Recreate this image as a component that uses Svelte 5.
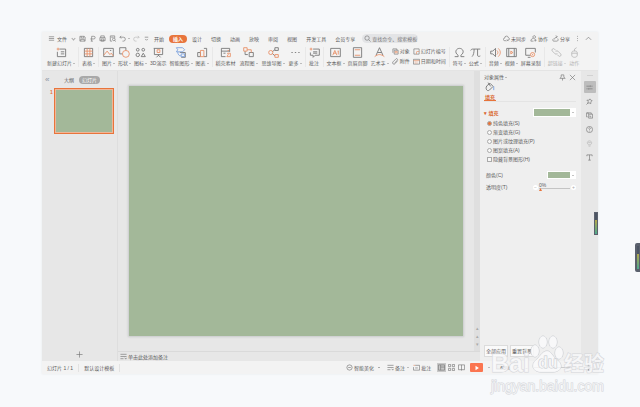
<script lang="ts">
  type Glyph = { g?: string; o?: string; b?: string };

  // 16x16 line icons: g = grey strokes, o = orange strokes, b = blue strokes
  const glyphs: Record<string, Glyph> = {
    menu: { g: "M2 4h12M2 8h12M2 12h12" },
    save: { g: "M2 3h10l2 2v9H2zM5 3v4h6V3M4 14v-4h8v4" },
    export: { g: "M4 14h5M6 14V3h5a3 3 0 010 6H3" },
    print: { g: "M4 6V2h8v4M2 6h12v7H2zM5 9h6v5H5z" },
    preview: { g: "M13 7V2H3v12h4M5 5h5M11 13a3 3 0 100-6 3 3 0 000 6M13 12l2 3" },
    undo: { g: "M5 2L2 5l3 3M2 5h8a4 4 0 010 9H8" },
    redo: { g: "M11 2l3 3-3 3M14 5H6a4 4 0 000 9h2" },
    more: { g: "M4 5h8M5 9l3 3 3-3" },
    search: { g: "M7 12A5 5 0 107 2a5 5 0 000 10M11 11l4 4" },
    cloud: { g: "M8 13H4a3 3 0 010-6 4 4 0 018-1 3 3 0 012 5M9 10l4 4M13 10l-4 4" },
    people: { g: "M8 7a3 3 0 100-5 3 3 0 000 5M8 8c-4 0-6 2-6 6h6M10 12h5M12 9v6" },
    share: { g: "M4 8c-3 2-3 6 0 6h7c3 0 4-3 2-6M6 10c0-4 3-6 6-6M9 1l3 3-3 3" },
    dots: { g: "M8 2v2M8 7v2M8 12v2" },
    up: { g: "M2 11l6-6 6 6" },
    newslide: { g: "M5 3h9v11H2V7M7 7h5M7 10h5", o: "M1 3h4M3 1v4" },
    table: { g: "M2 2h12v12H2z", o: "M2 6h12M2 10h12M6 2v12M10 2v12" },
    picture: { g: "M1 2h14v12H1zM10 5h2", o: "M1 12l5-6 4 5 2-2 3 4" },
    shape: { g: "M5 10H1V1h9v4", o: "M10 15A5 5 0 1010 5a5 5 0 000 10" },
    iconset: { g: "M4 6a2 2 0 100-4 2 2 0 000 4M12 6a2 2 0 100-4 2 2 0 000 4M4 14a2 2 0 100-5 2 2 0 000 5M12 9l3 5H9z" },
    demo: { g: "M1 2h14M2 2v9h12V2M8 11v2M5 15l3-3 3 3", o: "M6 4h4v4H6z" },
    smart: { g: "M7 8h8v7H9", b: "M2 1h9l3 3-3 3H2l2-3zM4 7c0 4 2 6 5 6M9 10h5v4H9z" },
    chart: { g: "M1 8h4v6H1zM10 2h4v12h-4", o: "M5 5h5v9H5z" },
    material: { g: "M8 14H2V2h12v5M2 6h12M5 9h3", o: "M11 9h4v5h-5l2-3zM11 5h2" },
    flow: { g: "M7 11H3V6M9 14h6V8H9z", o: "M1 1h5v5H1zM6 4h6v4" },
    mind: { g: "M6 7l4-3M6 9l4 4M10 1h5v4h-5z", o: "M4 11a3 3 0 100-6 3 3 0 000 6M10 11h5v4h-5z" },
    ellipsis: { g: "M2 8h2M7 8h2M12 8h2" },
    comment: { g: "M6 3h9v9H9l-3 3v-3H2V8M6 7h6M6 9h6", o: "M1 3h4M3 1v4" },
    textbox: { g: "M1 2h14v12H1z", o: "M4 12l3-7 3 7M5 9h4M11 6h2M12 6v5" },
    header: { g: "M2 1h12v14H2z", o: "M4 4h8M4 12h8" },
    wordart: { g: "M3 12L8 1l5 11M5 8h6", o: "M1 14c5-4 9-4 14 0" },
    object: { g: "M5 5h9v9H5zM2 11V2h9v3", o: "M7 8h5v3H7z" },
    clip: { g: "M13 6l-6 7a3 3 0 01-5-4l7-7a2 2 0 013 3l-6 7" },
    number: { g: "M2 2h12v12H2z", o: "M9 8h5M8 14V8" },
    date: { g: "M1 3h14v11H1z", o: "M1 6h14M4 9h2M8 9h2M4 12h2M8 12h2" },
    omega: { g: "M1 14h5v-2c-6-4-3-10 2-10s8 6 2 10v2h5" },
    pi: { g: "M1 5c1-2 2-2 4-2h10M6 3c0 5-1 9-3 11M11 3v9c0 2 2 2 4 1" },
    audio: { g: "M1 6h3l4-4v12l-4-4H1z", o: "M10 5c2 2 2 4 0 6M12 2c4 4 4 8 0 12" },
    video: { g: "M1 2h14v12H1zM4 2v12M12 2v12", o: "M7 6l3 2-3 2z" },
    record: { g: "M8 12H1V2h14v6M4 15h4", o: "M11 14a3 3 0 100-6 3 3 0 000 6M11 10v2" },
    link: { g: "M7 5L5 3a2 2 0 00-3 3l4 4a2 2 0 003-1M9 11l2 2a2 2 0 003-3l-4-4a2 2 0 00-3 1" },
    mouse: { g: "M4 8c0-3 8-3 8 0v4c0 4-8 4-8 0zM8 6V3l3-2M4 9h8" },
    pin: { g: "M5 2h6v5l3 3H2l3-3zM8 10v5" },
    close: { g: "M2 2l12 12M14 2L2 14" },
    bucket: { g: "M3 6l5-4 5 5-6 6c-4 3-7-3-4-7M5 1l4 6", b: "M14 7v6" },
    sliders: { g: "M1 5h8M12 5h3M10 3v4M1 11h3M7 11h8M6 9v4" },
    star: { g: "M9 2l2 3 3 1-3 3v4l-4-2-3 1 1-4-3-3h5zM1 15l4-4" },
    layers: { g: "M5 5V2H1v9h3M6 5h9v9H6zM3 2h9v3M9 8v3h3" },
    help: { g: "M8 15A7 7 0 108 1a7 7 0 000 14M6 6c0-3 5-2 4 0L8 8v2M8 12v1" },
    bulb: { g: "M6 11c-5-3-3-9 2-9s7 6 2 9zM6 14h4M5 6h6" },
    text: { g: "M2 5V2h12v3M8 2v12M5 14h6" },
    plus: { g: "M8 1v14M1 8h14" },
    notes: { g: "M1 3h14M1 8h14M1 13h7M11 11l2 3 2-3" },
    beauty: { g: "M8 14A6 6 0 108 2a6 6 0 000 12M5 8h6" },
    edit: { g: "M5 3h10v11H1V7M5 9h6", o: "M1 3h4" },
    normal: { g: "M1 2h14v12H1zM6 2v12M6 7h9" },
    grid: { g: "M1 1h5v5H1zM10 1h5v5h-5zM1 10h5v5H1zM10 10h5v5h-5z" },
    book: { g: "M1 2h14v11H1zM8 2v13" },
    fit: { g: "M8 1v14M1 8h14M6 3l2-2 2 2M6 13l2 2 2-2" },
  };

  type Tool = { icon: string; label: string; drop?: boolean; off?: boolean };

  const quick = ["save", "export", "print", "preview"];
  const tabs = ["开始", "插入", "设计", "切换", "动画", "放映", "审阅", "视图", "开发工具", "会员专享"];
  const groups: { wide?: boolean; tools: Tool[]; stacks?: Tool[][] }[] = [
    { tools: [{ icon: "newslide", label: "新建幻灯片", drop: true }] },
    { tools: [{ icon: "table", label: "表格", drop: true }] },
    {
      tools: [
        { icon: "picture", label: "图片", drop: true },
        { icon: "shape", label: "形状", drop: true },
        { icon: "iconset", label: "图标", drop: true },
        { icon: "demo", label: "3D演示" },
        { icon: "smart", label: "智能图形", drop: true },
        { icon: "chart", label: "图表", drop: true },
      ],
    },
    {
      wide: true,
      tools: [
        { icon: "material", label: "稻壳素材" },
        { icon: "flow", label: "流程图", drop: true },
        { icon: "mind", label: "思维导图", drop: true },
        { icon: "ellipsis", label: "更多", drop: true },
      ],
    },
    { tools: [{ icon: "comment", label: "批注" }] },
    {
      tools: [
        { icon: "textbox", label: "文本框", drop: true },
        { icon: "header", label: "页眉页脚" },
        { icon: "wordart", label: "艺术字", drop: true },
      ],
      stacks: [
        [{ icon: "object", label: "对象" }, { icon: "clip", label: "附件" }],
        [{ icon: "number", label: "幻灯片编号" }, { icon: "date", label: "日期和时间" }],
      ],
    },
    { tools: [{ icon: "omega", label: "符号", drop: true }, { icon: "pi", label: "公式", drop: true }] },
    {
      tools: [
        { icon: "audio", label: "音频", drop: true },
        { icon: "video", label: "视频", drop: true },
        { icon: "record", label: "屏幕录制" },
      ],
    },
    { tools: [{ icon: "link", label: "超链接", drop: true, off: true }, { icon: "mouse", label: "动作", off: true }] },
  ];
  const fills = ["纯色填充(S)", "渐变填充(G)", "图片或纹理填充(P)", "图案填充(A)"];
  const side = ["sliders", "star", "layers", "help", "bulb", "text"];

  let activeTab = $state("插入");
  let fill = $state("纯色填充(S)");
  let hideShapes = $state(false);
  let alpha = $state(0);
</script>

{#snippet icon(name: string)}
  <svg class="icon" viewBox="0 0 16 16" aria-hidden="true">
    {#if glyphs[name].g}<path class="g" d={glyphs[name].g} />{/if}
    {#if glyphs[name].o}<path class="o" d={glyphs[name].o} />{/if}
    {#if glyphs[name].b}<path class="b" d={glyphs[name].b} />{/if}
  </svg>
{/snippet}

<div class="page">
  <div class="app">
    <header class="menubar">
      <button class="file">{@render icon("menu")}文件<i class="chev"></i></button>
      <div class="quick">
        {#each quick as q}
          <button aria-label={q}>{@render icon(q)}</button>
        {/each}
        <button aria-label="undo">{@render icon("undo")}<i class="caret"></i></button>
        <button class="off" aria-label="redo">{@render icon("redo")}</button>
        <button aria-label="more">{@render icon("more")}</button>
      </div>
      <nav class="tabs">
        {#each tabs as t}
          <button class:active={t === activeTab} onclick={() => (activeTab = t)}>{t}</button>
        {/each}
      </nav>
      <label class="search">
        {@render icon("search")}
        <input type="text" placeholder="查找命令、搜索模板" aria-label="搜索" />
      </label>
      <div class="account">
        <button>{@render icon("cloud")}未同步</button>
        <button>{@render icon("people")}协作</button>
        <button>{@render icon("share")}分享</button>
        <button aria-label="options">{@render icon("dots")}</button>
        <button aria-label="collapse">{@render icon("up")}</button>
      </div>
    </header>

    <div class="ribbon">
      {#each groups as group}
        <div class="group" class:wide={group.wide}>
          {#each group.tools as t}
            <button class="tool" class:off={t.off}>
              {@render icon(t.icon)}
              <span>{t.label}{#if t.drop}<i class="caret"></i>{/if}</span>
            </button>
          {/each}
          {#each group.stacks ?? [] as stack}
            <div class="stack">
              {#each stack as t}
                <button>{@render icon(t.icon)}{t.label}</button>
              {/each}
            </div>
          {/each}
        </div>
      {/each}
    </div>

    <main class="work">
      <aside class="outline">
        <div class="outline-head">
          <button class="fold" aria-label="collapse">«</button>
          <button>大纲</button>
          <button class="pill">幻灯片</button>
        </div>
        <div class="thumb-row">
          <span class="num">1</span>
          <button class="thumb" aria-label="幻灯片 1"></button>
        </div>
        <button class="add" aria-label="add">{@render icon("plus")}</button>
      </aside>

      <section class="stage">
        <div class="canvas-row">
          <div class="canvas"><div class="slide"></div></div>
          <div class="scroll"><i></i><span>▴</span><span>▴</span><span>▾</span></div>
        </div>
        <div class="notes">{@render icon("notes")}单击此处添加备注</div>
      </section>

      <aside class="props">
        <div class="props-head">
          <span>对象属性<i class="caret"></i></span>
          <div>
            <button aria-label="pin">{@render icon("pin")}</button>
            <button aria-label="close">{@render icon("close")}</button>
          </div>
        </div>
        <div class="props-tab">
          <button>{@render icon("bucket")}<span>填充</span></button>
        </div>
        <div class="row section">
          <b>填充</b>
          <button class="swatch big" aria-label="填充"><i class="caret"></i></button>
        </div>
        <div class="options">
          {#each fills as f}
            <label><input type="radio" name="fill" value={f} bind:group={fill} />{f}</label>
          {/each}
          <label><input type="checkbox" bind:checked={hideShapes} />隐藏背景图形(H)</label>
        </div>
        <div class="row color">
          <span>颜色(C)</span>
          <button class="swatch" aria-label="颜色"><i class="caret"></i></button>
        </div>
        <div class="row">
          <label for="alpha">透明度(T)</label>
          <div class="slider">
            <button aria-label="decrease" onclick={() => (alpha = Math.max(0, alpha - 1))}>−</button>
            <div class="track">
              <output for="alpha">{alpha}%</output>
              <input id="alpha" type="range" min="0" max="100" bind:value={alpha} />
            </div>
            <button aria-label="increase" onclick={() => (alpha = Math.min(100, alpha + 1))}>+</button>
          </div>
        </div>
        <div class="apply">
          <button>全部应用</button>
          <button>重置背景</button>
        </div>
      </aside>

      <aside class="rail">
        <i class="grip"></i>
        {#each side as s, n}
          <button class:on={n === 0} class:off={s === "bulb"} aria-label={s}>{@render icon(s)}</button>
        {/each}
        <button class="rail-more" aria-label="more">{@render icon("ellipsis")}</button>
      </aside>
    </main>

    <footer class="status">
      <span class="cell">幻灯片 1 / 1</span>
      <span class="cell">默认设计模板</span>
      <div class="status-right">
        <button class="beauty">{@render icon("beauty")}智能美化<i class="caret flip"></i></button>
        <button>{@render icon("notes")}备注<i class="caret"></i></button>
        <button>{@render icon("edit")}批注</button>
        <div class="views">
          <button class="on" aria-label="normal">{@render icon("normal")}</button>
          <button aria-label="sorter">{@render icon("grid")}</button>
          <button aria-label="reading">{@render icon("book")}</button>
        </div>
        <button class="play" aria-label="play">
          <svg viewBox="0 0 16 16"><path d="M4 2l9 6-9 6z" /></svg>
        </button>
        <i class="caret"></i>
        <div class="zoom">
          <span>63%</span><i class="caret"></i><span>−</span><i class="bar"></i><span>+</span>
          <button aria-label="fit">{@render icon("fit")}</button>
        </div>
      </div>
    </footer>
    <div class="meter inner"></div>
  </div>
  <div class="meter outer"></div>

  <div class="watermark">
    <div class="brand">
      <span>Bai</span>
      <div class="paw">
        <svg viewBox="0 0 34 40" aria-hidden="true">
          <ellipse cx="5" cy="17" rx="4" ry="6" />
          <ellipse cx="13" cy="8" rx="4" ry="6" />
          <ellipse cx="23" cy="8" rx="4" ry="6" />
          <ellipse cx="29" cy="19" rx="4" ry="6" />
          <path d="M17 17c-4 0-6 4-9 7s-5 4-5 8 4 6 8 6h12c4 0 8-2 8-6s-3-5-6-8-4-7-8-7z" />
        </svg>
        <span>du</span>
      </div>
      <span class="cn">经验</span>
    </div>
    <div class="site">jingyan.baidu.com</div>
  </div>
</div>

<style>
  :global(body) { background: #f7f9fb; }
  .page {
    position: relative;
    box-sizing: border-box;
    min-height: 100vh;
    padding: 32px 42px 33px;
    display: flex;
    overflow: hidden;
    font: 5px/8px "Liberation Sans", "Noto Sans CJK SC", sans-serif;
    color: #5e5e5e;
  }
  .page * { box-sizing: border-box; }
  button {
    display: flex;
    align-items: center;
    gap: 1px;
    padding: 0;
    border: none;
    background: none;
    font: inherit;
    color: inherit;
    white-space: nowrap;
  }
  .icon { width: 7px; height: 7px; flex: none; fill: none; stroke-width: 1.5; }
  .g { stroke: #777; }
  .o { stroke: #e89168; }
  .b { stroke: #7da3e0; }
  .off { opacity: 0.45; }
  .caret {
    display: inline-block;
    flex: none;
    margin-left: 1px;
    border: 1px solid transparent;
    border-top-color: #888;
    border-bottom: none;
    vertical-align: middle;
  }
  .flip { margin-left: 3px; border-top: none; border-bottom: 1px solid #666; }
  .chev {
    width: 3px;
    height: 3px;
    margin-left: 3px;
    border: solid #aaa;
    border-width: 0 1px 1px 0;
    transform: rotate(45deg);
  }

  .app {
    position: relative;
    flex: 1;
    min-width: 0;
    display: flex;
    flex-direction: column;
    background: #f3f3f3;
    box-shadow: 0 0 2px #e6e9ec;
  }
  .menubar { display: flex; align-items: center; height: 13px; padding: 0 6px; }
  .file { gap: 2px; width: 31px; }
  .quick { display: flex; align-items: center; gap: 3px; width: 75px; }
  .tabs { display: flex; align-items: center; gap: 9px; }
  .tabs .active {
    margin: 0 -4px;
    padding: 0 4px;
    border-radius: 4px;
    background: #e8743b;
    color: #fff;
    font-weight: bold;
  }
  .search {
    display: flex;
    align-items: center;
    gap: 1px;
    width: 56px;
    height: 9px;
    margin-left: 7px;
    padding-left: 2px;
    border-radius: 5px;
    background: #e3e4e6;
  }
  .search input {
    flex: 1;
    min-width: 0;
    padding: 0;
    border: none;
    outline: none;
    background: none;
    font: inherit;
    color: #666;
  }
  .search input::placeholder { color: #777; }
  .account { display: flex; gap: 4px; margin-left: auto; }

  .ribbon { display: flex; height: 26px; padding: 2px 0 3px 2px; border-bottom: 1px solid #e4e4e4; }
  .group { display: flex; gap: 3px; padding: 0 3px; border-right: 1px solid #e8e8e8; }
  .group:last-child { border-right: none; }
  .wide { gap: 4px; }
  .tool { flex-direction: column; gap: 1px; }
  .tool .icon { width: 11px; height: 11px; stroke-width: 1.3; }
  .stack { display: flex; flex-direction: column; gap: 2px; }

  .work { flex: 1; display: flex; min-height: 0; background: #e7e7e7; }
  .outline { width: 76px; display: flex; flex-direction: column; border-right: 1px solid #dedede; }
  .outline-head { display: flex; align-items: center; gap: 5px; height: 17px; padding: 0 3px; }
  .fold { width: 14px; font-size: 8px; color: #8a93a3; }
  .pill { padding: 0 3px; border-radius: 4px; background: #a8a8a8; color: #fff; }
  .thumb-row { display: flex; align-items: flex-start; padding: 0 3px 0 8px; }
  .num { width: 4px; color: #e8743b; font-weight: bold; }
  .thumb {
    flex: 1;
    height: 46px;
    padding: 1px;
    border: 1px solid #e8743b;
    outline: 1px solid #f0b697;
    outline-offset: -2px;
    background: #a3b899;
    background-clip: content-box;
  }
  .add { margin: auto auto 3px; }

  .stage { flex: 1; min-width: 0; display: flex; flex-direction: column; }
  .canvas-row { flex: 1; display: flex; }
  .canvas { flex: 1; display: flex; padding: 15px 11px; }
  .slide { flex: 1; background: #a3b899; box-shadow: 0 0 2px 1px #c8c9ca; }
  .scroll {
    width: 6px;
    display: flex;
    flex-direction: column;
    align-items: center;
    padding-bottom: 3px;
    background: #dfdfdf;
    color: #aaa;
  }
  .scroll i { flex: 1; }
  .notes {
    display: flex;
    align-items: center;
    gap: 1px;
    height: 10px;
    padding-left: 2px;
    border-top: 1px solid #dadada;
  }

  .props { width: 101px; display: flex; flex-direction: column; padding: 1px 5px 4px 4px; background: #efefef; }
  .props-head { display: flex; justify-content: space-between; height: 10px; align-items: center; }
  .props-head div { display: flex; gap: 3px; }
  .props-tab { display: flex; height: 20px; margin-bottom: 5px; border-bottom: 1px solid #e4e4e4; }
  .props-tab button {
    flex-direction: column;
    padding: 0 1px;
    border-bottom: 1px solid #e8743b;
    color: #d9642b;
    font-weight: bold;
  }
  .props-tab .icon { width: 10px; height: 10px; }
  .row { display: flex; align-items: center; justify-content: space-between; height: 12px; }
  .section { height: 11px; }
  .section b { color: #d9642b; }
  .section b::before { content: "▾ "; }
  .swatch {
    justify-content: flex-end;
    width: 29px;
    height: 8px;
    padding-right: 1px;
    border: 1px solid #fff;
    background: linear-gradient(to right, #a3b899 calc(100% - 5px), #fff 0);
  }
  .big { width: 43px; height: 9px; }
  .options { display: flex; flex-direction: column; gap: 1px; padding: 1px 0 0 3px; }
  .options label { display: flex; align-items: center; gap: 1px; }
  .options input {
    appearance: none;
    width: 5px;
    height: 5px;
    margin: 0;
    border: 1px solid #aaa;
    background: #f8f8f8;
  }
  .options input[type="radio"] { border-radius: 50%; }
  .options input:checked { background: #e8743b; }
  .color { margin-top: 6px; }
  .row > span, .row > label { padding-left: 2px; }
  .slider { display: flex; align-items: center; gap: 1px; }
  .slider button {
    justify-content: center;
    width: 5px;
    height: 5px;
    border-radius: 50%;
    background: #fff;
    color: #aaa;
  }
  .track { display: flex; flex-direction: column; width: 31px; }
  .track output { height: 5px; line-height: 5px; }
  .track input { appearance: none; width: 100%; height: 3px; margin: 0; background: linear-gradient(#c4c4c4 1px, transparent 0); }
  .track input::-webkit-slider-thumb {
    appearance: none;
    width: 3px;
    height: 3px;
    background: #e8743b;
    clip-path: polygon(50% 0, 100% 100%, 0 100%);
  }
  .apply { display: flex; gap: 2px; margin-top: auto; }
  .apply button { padding: 1px; border: 1px solid #dcdcdc; background: #fafafa; }

  .rail { width: 17px; display: flex; flex-direction: column; align-items: center; gap: 2px; padding-top: 4px; }
  .grip { width: 6px; height: 1px; margin-bottom: 3px; background: #d2d2d2; }
  .rail button { justify-content: center; width: 12px; height: 12px; border-radius: 1px; }
  .rail .on { background: #bdbdbd; }
  .rail .rail-more { margin-top: auto; }

  .status { display: flex; align-items: center; height: 13px; }
  .cell { padding: 0 5px; border-right: 1px solid #e2e2e2; }
  .status-right { display: flex; align-items: center; gap: 4px; margin-left: auto; padding-right: 6px; }
  .beauty { margin-right: 3px; }
  .views { display: flex; gap: 1px; margin-left: 2px; }
  .views button { justify-content: center; width: 9px; height: 9px; }
  .views .on { background: #c8c8c8; }
  .play { justify-content: center; width: 13px; height: 9px; border-radius: 1px; background: #fb7550; }
  .play svg { width: 6px; height: 6px; fill: #fff; }
  .zoom { display: flex; align-items: center; gap: 6px; margin-left: 6px; }
  .bar { width: 36px; height: 1px; background: #ccc; }

  .meter {
    position: absolute;
    right: 0;
    border: 1px solid #5b616d;
    background: linear-gradient(#4c5563 35%, #b3a84c 0, #4fa98f) padding-box;
  }
  .inner { top: 180px; width: 4px; height: 23px; }
  .outer {
    top: 243px;
    width: 5px;
    height: 29px;
    border-width: 3px 1px 3px 2px;
    border-radius: 2px 0 0 2px;
  }

  .watermark {
    position: absolute;
    right: 33px;
    bottom: 12px;
    width: 116px;
    color: rgba(250, 250, 251, 0.8);
    -webkit-text-stroke: 1px #d3d5d9;
    paint-order: stroke fill;
  }
  .brand { display: flex; align-items: flex-end; height: 46px; font: bold 25px/28px "Liberation Sans", sans-serif; }
  .paw { position: relative; width: 34px; height: 43px; }
  .paw svg { width: 34px; height: 40px; fill: rgba(250, 250, 251, 0.8); stroke: #c8cbd0; }
  .paw span { position: absolute; left: 8px; bottom: 4px; font-size: 16px; line-height: 20px; -webkit-text-stroke: 1px #c6c9ce; }
  .cn { font: bold 20px/28px "Noto Sans CJK SC", sans-serif; }
  .site { font: 14px/18px "Liberation Sans", sans-serif; }
</style>
